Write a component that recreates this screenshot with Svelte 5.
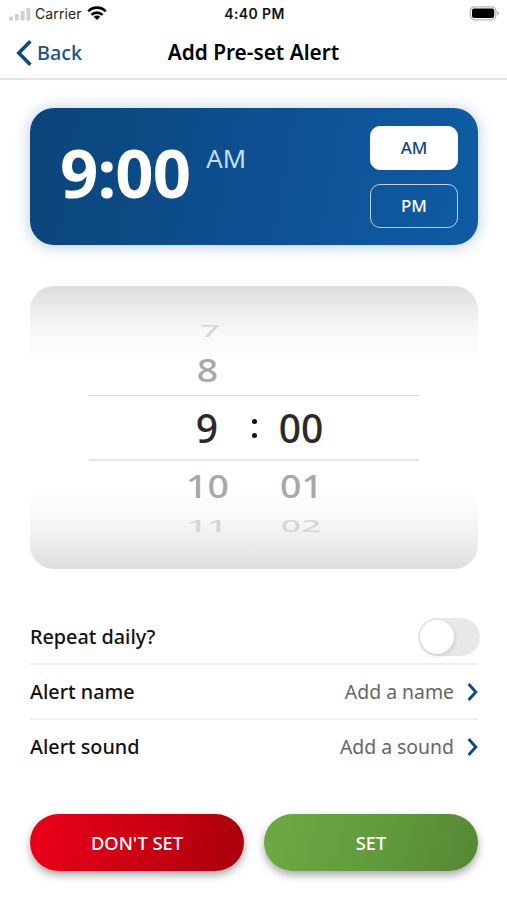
<script lang="ts">
  type WheelRow = { hour: string; minute: string; kind: string };

  const wheel: WheelRow[] = [
    { hour: "7", minute: "", kind: "far above" },
    { hour: "8", minute: "", kind: "near" },
    { hour: "9", minute: "00", kind: "selected" },
    { hour: "10", minute: "01", kind: "near" },
    { hour: "11", minute: "02", kind: "far below" },
  ];

  const options = [
    { label: "Alert name", value: "Add a name" },
    { label: "Alert sound", value: "Add a sound" },
  ];

  let period = $state("AM");
  let repeat = $state(false);
</script>

<div class="screen">
  <div class="status">
    <div class="carrier">
      <svg class="signal" width="22" height="14" viewBox="0 0 22 14" fill="#d0d0d0">
        <rect x="0" y="9.5" width="4" height="4" rx="1" />
        <rect x="5.8" y="7" width="4" height="6.5" rx="1" />
        <rect x="11.6" y="4" width="4" height="9.5" rx="1" />
        <rect x="17.4" y="1" width="4" height="12.5" rx="1" />
      </svg>
      <span>Carrier</span>
      <svg class="wifi" width="20" height="15" viewBox="0 0 20 15" fill="none" stroke="#000" stroke-width="2.7">
        <path d="M1.3 5.4C6.1 0.4 13.9 0.4 18.7 5.4" />
        <path d="M4.5 8.9C7.5 5.8 12.5 5.8 15.5 8.9" />
        <path d="M10 13.9L6.7 10.7C8.6 9 11.4 9 13.3 10.7Z" fill="#000" stroke="none" />
      </svg>
    </div>
    <span class="clock">4:40 PM</span>
    <svg class="battery" width="31" height="15" viewBox="0 0 31 15">
      <rect x="1.4" y="0.8" width="25.4" height="13" rx="4" fill="#fff" stroke="#b5b5b5" stroke-width="1.3" />
      <rect x="3" y="2.6" width="22.2" height="9.4" rx="2" fill="#000" />
      <path d="M28.2 5.1C30.4 5.8 30.4 8.8 28.2 9.5Z" fill="#b5b5b5" />
    </svg>
  </div>

  <header>
    <button class="back">
      <svg width="16" height="26" viewBox="0 0 16 26" fill="none" stroke="#0c4a87" stroke-width="3.6">
        <path d="M14.4 1.3L2.8 13L14.4 24.7" />
      </svg>
      Back
    </button>
    <h1>Add Pre-set Alert</h1>
  </header>

  <main>
    <section class="summary">
      <span class="time">9:00</span>
      <span class="suffix">{period}</span>
      <div class="periods">
        {#each ["AM", "PM"] as p}
          <button class:active={period === p} onclick={() => (period = p)}>{p}</button>
        {/each}
      </div>
    </section>

    <section class="picker">
      {#each wheel as row}
        <div class="wheel-row {row.kind}">
          <span class="digits">{row.hour}</span>
          <span class="colon">
            {#if row.kind === "selected"}<i></i><i></i>{/if}
          </span>
          <span class="digits">{row.minute}</span>
        </div>
      {/each}
    </section>

    <section class="options">
      <div class="option">
        <span class="label">Repeat daily?</span>
        <button
          class="toggle"
          class:on={repeat}
          aria-label="Repeat daily"
          onclick={() => (repeat = !repeat)}
        >
          <span class="knob"></span>
        </button>
      </div>
      {#each options as option}
        <div class="option">
          <span class="label">{option.label}</span>
          <span class="value">{option.value}</span>
          <svg width="11" height="18" viewBox="0 0 11 18" fill="none" stroke="#0c4a87" stroke-width="2.9">
            <path d="M1.6 1L8.8 9L1.6 17" />
          </svg>
        </div>
      {/each}
    </section>

    <footer>
      <button class="cancel">DON'T SET</button>
      <button class="confirm">SET</button>
    </footer>
  </main>
</div>

<style>
  :global(body) {
    background: #fff;
  }
  .screen {
    width: 507px;
    height: 900px;
    overflow: hidden;
    background: #fff;
    color: #111;
    font-family: "Noto Sans", "Open Sans", sans-serif;
  }
  button {
    margin: 0;
    padding: 0;
    border: 0;
    background: none;
    font: inherit;
    color: inherit;
  }
  svg {
    display: block;
    flex: none;
  }
  .status {
    display: grid;
    grid-template-columns: 1fr auto 1fr;
    align-items: center;
    height: 27px;
    padding: 0 7px 0 9px;
    font-family: Inter, Roboto, sans-serif;
    font-size: 14px;
  }
  .carrier {
    display: flex;
    align-items: center;
    color: #222;
  }
  .carrier span {
    margin: 0 5px 0 4px;
    letter-spacing: 0.1px;
  }
  .clock {
    font-weight: 600;
    letter-spacing: 0.4px;
    color: #111;
  }
  .battery {
    justify-self: end;
  }
  header {
    display: grid;
    grid-template-columns: 1fr auto 1fr;
    align-items: center;
    height: 51px;
    padding: 0 16px;
    border-bottom: 2px solid #e6e6e6;
  }
  .back {
    display: flex;
    align-items: center;
    gap: 5px;
    font-size: 19.8px;
    font-weight: 500;
    color: #1b5088;
  }
  h1 {
    margin: 0 0 2px;
    font-size: 20.8px;
    font-weight: 560;
    line-height: 28px;
    color: #000;
  }
  main {
    padding: 28px 29px 0 30px;
  }
  .summary {
    display: flex;
    box-sizing: border-box;
    height: 137px;
    padding: 17.5px 20px 0 30px;
    border-radius: 24px;
    background: linear-gradient(100deg, #0b4479 0%, #0d5091 50%, #105ba3 100%);
    box-shadow: 0 1px 15px rgba(28, 84, 144, 0.32);
  }
  .time {
    font-size: 67px;
    font-weight: 700;
    line-height: 93px;
    letter-spacing: -0.9px;
    color: #fff;
  }
  .suffix {
    margin: 15px 0 0 16px;
    font-size: 25.8px;
    line-height: 34px;
    color: #c2dfff;
  }
  .periods {
    display: flex;
    flex-direction: column;
    gap: 14px;
    margin-left: auto;
  }
  .periods button {
    box-sizing: border-box;
    width: 88px;
    height: 44px;
    border: 1px solid #b9d3ec;
    border-radius: 10px;
    font-size: 17px;
    font-weight: 500;
    color: #fff;
  }
  .periods button.active {
    border-color: #fff;
    background: #fff;
    color: #0d4781;
  }
  .picker {
    display: flex;
    flex-direction: column;
    align-items: center;
    box-sizing: border-box;
    height: 283px;
    margin-top: 41px;
    padding-top: 27px;
    border-radius: 24px;
    background: linear-gradient(
      #dedede 0,
      #ececec 24px,
      #f8f8f8 45px,
      #fff 78px,
      #fff 205px,
      #f8f8f8 232px,
      #ececec 257px,
      #dedede 283px
    );
  }
  .wheel-row {
    display: grid;
    grid-template-columns: 60px 34px 60px;
    justify-content: center;
    align-items: center;
    box-sizing: border-box;
    width: 330px;
  }
  .digits {
    text-align: center;
    line-height: 36px;
  }
  .far {
    height: 36px;
    font-size: 34px;
    font-weight: 500;
    color: #d6d6d6;
  }
  .above .digits {
    padding-left: 6px;
    transform: scaleY(0.45);
  }
  .below .digits {
    transform: translateY(1px) scale(1.04, 0.48);
  }
  .near {
    height: 42px;
    font-size: 36px;
    font-weight: 500;
    color: #a8a8a8;
  }
  .near .digits {
    padding-left: 1px;
    transform: scale(1.04, 0.92);
  }
  .selected {
    height: 66px;
    margin: 4px 0;
    border-top: 1px solid #d9d9d9;
    border-bottom: 2px solid #e6e6e6;
    font-size: 39px;
    font-weight: 500;
    color: #2a2a2a;
  }
  .selected .digits {
    padding: 1px 0 0;
  }
  .colon {
    display: flex;
    flex-direction: column;
    align-items: center;
    gap: 9px;
    padding-top: 2px;
  }
  .colon i {
    width: 5px;
    height: 5px;
    border-radius: 50%;
    background: #111;
  }
  .options {
    margin-top: 41px;
  }
  .option {
    display: flex;
    align-items: center;
    box-sizing: border-box;
    height: 55px;
    border-bottom: 2px solid #efefef;
    font-size: 19.4px;
  }
  .option:last-child {
    border-bottom-color: transparent;
  }
  .label {
    flex: 1;
    font-size: 19.8px;
    font-weight: 550;
  }
  .value {
    margin-right: 13px;
    color: #666;
  }
  .toggle {
    width: 62px;
    height: 38px;
    margin-right: -2px;
    padding: 2px;
    border-radius: 19px;
    background: #e8e8ea;
  }
  .toggle.on {
    background: #6ca644;
  }
  .knob {
    display: block;
    width: 34px;
    height: 34px;
    border-radius: 50%;
    background: #fff;
    box-shadow: 1px 2px 4px rgba(0, 0, 0, 0.12);
  }
  .on .knob {
    margin-left: 24px;
  }
  footer {
    display: grid;
    grid-template-columns: 1fr 1fr;
    gap: 20px;
    margin-top: 39px;
  }
  footer button {
    height: 57px;
    border-radius: 29px;
    font-size: 18.3px;
    font-weight: 500;
    color: #fff;
    box-shadow: 0 4px 8px rgba(0, 0, 0, 0.35);
  }
  .cancel {
    background: linear-gradient(105deg, #e60018 10%, #c90012 55%, #a8000c 100%);
  }
  .confirm {
    background: linear-gradient(105deg, #6ca742 10%, #609a3c 55%, #568735 100%);
  }
</style>
